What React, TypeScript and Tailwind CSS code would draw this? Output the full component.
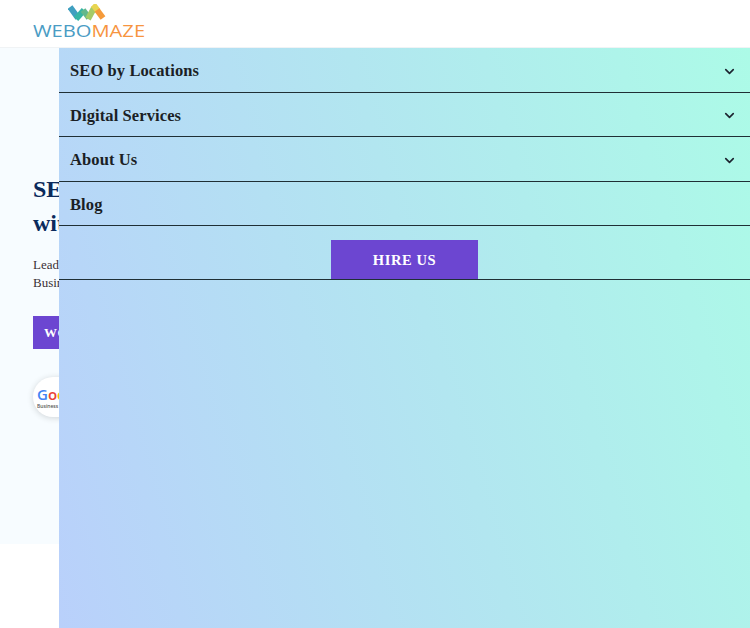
import { ChevronDown } from 'lucide-react';

const serif = { fontFamily: '"Liberation Serif", "DejaVu Serif", serif' };
const sans = { fontFamily: '"Open Sans", "Liberation Sans", sans-serif' };

const navItems = [
  { label: 'SEO by Locations', hasMenu: true, height: 'h-[45px]' },
  { label: 'Digital Services', hasMenu: true, height: 'h-[44px]' },
  { label: 'About Us', hasMenu: true, height: 'h-[45px]' },
  { label: 'Blog', hasMenu: false, height: 'h-[44px]' },
];

function Logo() {
  return (
    <div className="w-[111px]">
      <svg width="38" height="18" viewBox="0 0 38 18" className="ml-[35px] block" fill="none" strokeWidth="6">
        <path d="M2 3 L10 14" stroke="#3f9fc0" />
        <path d="M8 15 L16 6" stroke="#35b5a5" />
        <path d="M15 6 L21 14" stroke="#62b88c" />
        <path d="M20 15 L26 4" stroke="#a5cb68" />
        <path d="M25 5 L27 3 L30 7" stroke="#e8d550" />
        <path d="M29 6 L35 14" stroke="#f59a3a" />
      </svg>
      <div
        className="mt-[2px] origin-left scale-x-[1.3] text-[15.5px] leading-[14px] font-normal whitespace-nowrap"
        style={sans}
      >
        <span className="text-[#4a9cc4]">WEBO</span>
        <span className="text-[#f7953f]">MAZE</span>
      </div>
    </div>
  );
}

export default function App() {
  return (
    <div className="relative h-[628px] overflow-hidden bg-white" style={serif}>
      {/* Header */}
      <header className="h-12 pl-[33px] pt-1 bg-white border-b border-[#f0f3f5]">
        <Logo />
      </header>

      {/* Hero behind the menu */}
      <section className="h-[496px] bg-[#f7fcff] pl-[33px] pt-[124px]">
        <h1 className="text-[24px] leading-[34px] font-bold text-[#0b2a5c] whitespace-nowrap">
          SEO Services
          <br />
          with Results
        </h1>
        <p className="mt-[16px] text-[13px] leading-[18px] text-[#3a3035] whitespace-nowrap">
          Leading SEO Company
          <br />
          Business Growth
        </p>
        <button className="mt-[24px] block h-[33px] w-[120px] bg-[#6c46d1] pl-[11px] text-left text-[13px] font-bold tracking-[0.5px] text-white">
          WORK WITH US
        </button>
        <div className="mt-[28px] flex h-10 w-[60px] flex-col items-start justify-center rounded-full bg-white pl-[4px] shadow-[0_1px_6px_rgba(0,0,0,0.16)]">
          <div className="text-[15px] leading-[17px] font-semibold whitespace-nowrap" style={sans}>
            <span className="text-[#4285f4]">G</span>
            <span className="text-[#ea4335]">o</span>
            <span className="text-[#fbbc05]">o</span>
            <span className="text-[#4285f4]">g</span>
          </div>
          <div className="text-[5px] leading-[6px] font-semibold text-[#555] whitespace-nowrap" style={sans}>
            Business
          </div>
        </div>
      </section>

      {/* Slide-in mobile menu */}
      <nav className="absolute top-12 left-[59px] right-0 h-[580px] bg-[linear-gradient(74deg,#b9d0fb_0%,#b2e6f0_53%,#acfbe7_100%)]">
        {navItems.map((item) => (
          <div
            key={item.label}
            className={`flex items-center justify-between border-b border-[#1f2f35] pl-[11px] pr-[13px] pt-[3px] ${item.height}`}
          >
            <span className="text-[16.5px] font-bold tracking-[0.1px] text-[#1b1f25]">{item.label}</span>
            {item.hasMenu && <ChevronDown size={15} strokeWidth={2.6} className="-mt-px text-[#1d2530]" />}
          </div>
        ))}
        <div className="flex h-[54px] items-end justify-center border-b border-[#1f2f35]">
          <button className="h-[39px] w-[147px] bg-[#6c46d1] pt-[2px] text-[14.5px] font-bold tracking-[0.6px] text-white">
            HIRE US
          </button>
        </div>
      </nav>
    </div>
  );
}
